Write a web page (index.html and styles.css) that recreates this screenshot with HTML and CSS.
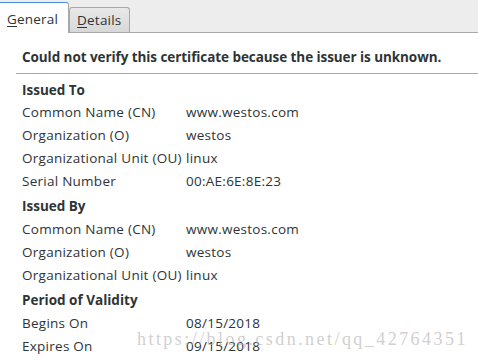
FILE: index.html
```html
<!DOCTYPE html>
<html>
<head>
<meta charset="utf-8">
<link rel="stylesheet" href="styles.css">
</head>
<body>
<div class="tabs">
  <div class="tab active"><span class="u">G</span>eneral</div>
  <div class="tab"><span class="u">D</span>etails</div>
</div>
<div class="content">
  <div class="warn">Could not verify this certificate because the issuer is unknown.</div>
  <div class="sep"></div>
  <div class="grid">
    <div class="head first">Issued To</div>
    <div class="l">Common Name (CN)</div><div class="v">www.westos.com</div>
    <div class="l">Organization (O)</div><div class="v">westos</div>
    <div class="l">Organizational Unit (OU)</div><div class="v">linux</div>
    <div class="l">Serial Number</div><div class="v">00:AE:6E:8E:23</div>
    <div class="head">Issued By</div>
    <div class="l">Common Name (CN)</div><div class="v">www.westos.com</div>
    <div class="l">Organization (O)</div><div class="v">westos</div>
    <div class="l">Organizational Unit (OU)</div><div class="v">linux</div>
    <div class="head">Period of Validity</div>
    <div class="l">Begins On</div><div class="v">08/15/2018</div>
    <div class="l">Expires On</div><div class="v">09/15/2018</div>
  </div>
</div>
<div class="watermark">https://blog.csdn.net/qq_42764351</div>
</body>
</html>
```
FILE: styles.css
```css
html, body {
  margin: 0;
  padding: 0;
  background: #ffffff;
  width: 478px;
  height: 359px;
  overflow: hidden;
  position: relative;
  font-family: "Open Sans", "DejaVu Sans", sans-serif;
  font-size: 13.5px;
  letter-spacing: 0.26px;
  color: #2e3436;
}
.tabs {
  height: 32px;
  background: #ededed;
  border-bottom: 1px solid #a8a8a8;
  display: flex;
  align-items: flex-end;
}
.tab {
  height: 24px;
  line-height: 24px;
  padding: 0 8px 0 7px;
  background: linear-gradient(#e8e8e8, #d8d8d8);
  border: 1px solid #a8a8a8;
  border-bottom: none;
  border-radius: 3px 3px 0 0;
  color: #2e3436;
  letter-spacing: 0.2px;
}
.tab.active {
  height: 30px;
  line-height: 32px;
  background: #ffffff;
  border: none;
  border-top: 1px solid #4a90d9;
  border-right: 1px solid #a8a8a8;
  margin-bottom: -1px;
  padding: 0 10px 0 7px;
  border-radius: 0 3px 0 0;
}
.u {
  text-decoration: underline;
  text-underline-offset: 2px;
}
.content {
  padding: 12px 0 0 16px;
}
.warn {
  font-weight: bold;
  letter-spacing: -0.07px;
  padding-left: 6px;
  height: 28px;
  line-height: 24px;
}
.sep {
  height: 1px;
  background: #a8a8a8;
  margin-bottom: 4px;
}
.grid {
  display: grid;
  grid-template-columns: 164px auto;
  padding-left: 6px;
}
.grid > div {
  height: 23px;
  line-height: 23px;
  white-space: nowrap;
}
.head {
  grid-column: 1 / 3;
  font-weight: bold;
  letter-spacing: 0;
  padding-top: 2px;
}
.head.first {
  padding-top: 1px;
  height: 22px !important;
}
.watermark {
  position: absolute;
  left: 137px;
  top: 329px;
  font-family: "Liberation Serif", serif;
  font-size: 18px;
  letter-spacing: 2.45px;
  color: rgba(180, 180, 180, 0.65);
  white-space: nowrap;
}
```
